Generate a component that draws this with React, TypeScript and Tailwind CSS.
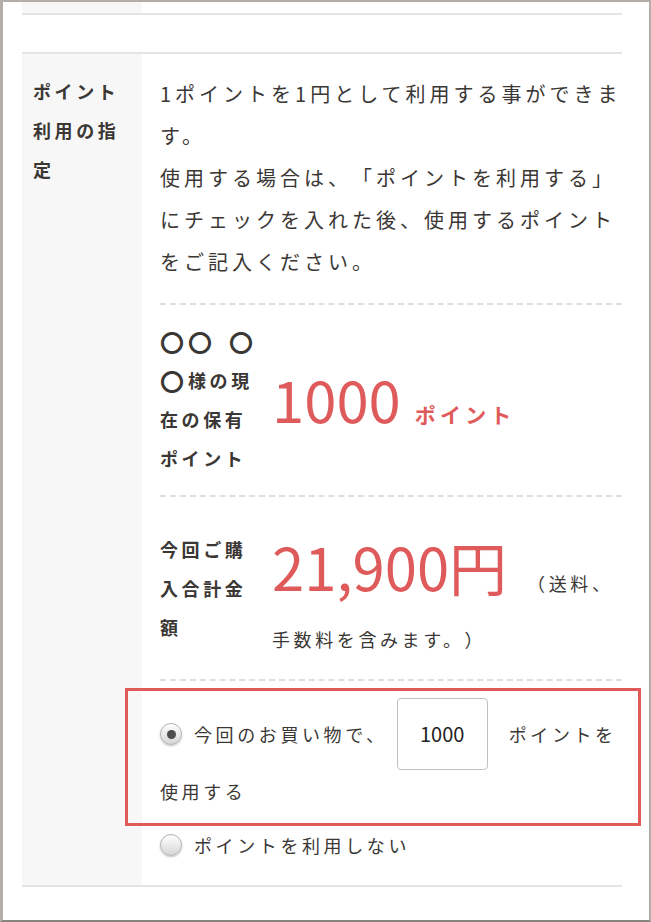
// ポイント利用の指定 (point usage form row)

function Radio({ checked }: { checked?: boolean }) {
  return (
    <span className="w-[22px] h-[22px] shrink-0 rounded-full border border-[#b4b4b4] bg-gradient-to-b from-white to-[#d6d6d6] shadow-[0_1px_2px_rgba(0,0,0,0.25)] flex items-center justify-center">
      {checked && <span className="w-[9px] h-[9px] rounded-full bg-[#4d4d4d]" />}
    </span>
  );
}

// big masked-name circle
function Maru() {
  return <span className="inline-block text-[24px] leading-none tracking-normal align-[-3px] mr-[4px]">〇</span>;
}

const introLines = [
  "1ポイントを1円として利用する事ができま",
  "す。",
  "使用する場合は、「ポイントを利用する」",
  "にチェックを入れた後、使用するポイント",
  "をご記入ください。",
];

export default function App() {
  return (
    <div className="relative w-[651px] h-[922px] bg-white border-l-[3px] border-t-2 border-r-2 border-[#b4aea8] border-b-2 border-b-[#8a847e] text-[#3b3735] font-['Noto_Sans_CJK_JP','Noto_Sans',sans-serif] [text-spacing-trim:space-all] overflow-hidden">
      <div className="ml-[19px] mr-[27px]">
        {/* end of previous row */}
        <div className="flex h-[13px] border-b-2 border-[#e4e4e4]">
          <div className="w-[120px] bg-[#f7f7f7]" />
        </div>

        {/* point row */}
        <div className="mt-[37px] flex border-t-2 border-b-2 border-[#e4e4e4]">
          <div className="w-[120px] shrink-0 bg-[#f7f7f7] pt-[18px] pl-[11px] text-[18px] leading-[39px] font-bold tracking-[0.2em] whitespace-nowrap">
            ポイント
            <br />
            利用の指
            <br />
            定
          </div>

          <div className="flex-1 pl-[18px]">
            {/* description */}
            <div className="pt-[19px] pb-[20px] border-b-2 border-dashed border-[#dedede] text-[20px] leading-[42px] tracking-[0.2em] whitespace-nowrap">
              {introLines.map((line) => (
                <div key={line}>{line}</div>
              ))}
            </div>

            {/* current points */}
            <div className="flex items-center py-[17px] border-b-2 border-dashed border-[#dedede]">
              <div className="w-[112px] shrink-0 text-[18px] leading-[39px] font-bold tracking-[0.2em] whitespace-nowrap">
                <div>
                  <Maru />
                  <Maru />
                  <span className="inline-block w-[13px]" />
                  <Maru />
                </div>
                <div>
                  <Maru />
                  様の現
                </div>
                <div>在の保有</div>
                <div>ポイント</div>
              </div>
              <div className="flex items-baseline text-[#df5a5a]">
                <span className="text-[58px] leading-none">1000</span>
                <span className="ml-[14px] text-[21px] font-bold tracking-[0.2em]">ポイント</span>
              </div>
            </div>

            {/* total */}
            <div className="flex items-center pt-[20px] pb-[19px] border-b-2 border-dashed border-[#dedede]">
              <div className="w-[112px] shrink-0 text-[18px] leading-[39px] font-bold tracking-[0.2em] whitespace-nowrap">
                今回ご購
                <br />
                入合計金
                <br />
                額
              </div>
              <div className="whitespace-nowrap">
                <div className="flex items-baseline">
                  <span className="text-[58px] leading-[98px] text-[#df5a5a]">21,900円</span>
                  <span className="ml-[20px] text-[18px] tracking-[0.2em]">（送料、</span>
                </div>
                <div className="mt-[3px] text-[18px] leading-[42px] tracking-[0.2em]">手数料を含みます。）</div>
              </div>
            </div>

            {/* radios */}
            <div className="pt-[17px] pb-[19px] text-[18px] tracking-[0.2em] whitespace-nowrap">
              <div className="flex items-center h-[72px]">
                <Radio checked />
                <span className="ml-[12px]">今回のお買い物で、</span>
                <div className="ml-[9px] w-[91px] h-[72px] shrink-0 rounded-[4px] border border-[#c4c0bd] flex items-center justify-center text-[20px] tracking-normal text-[#222]">
                  1000
                </div>
                <span className="ml-[21px]">ポイントを</span>
              </div>
              <div className="leading-[42px]">使用する</div>
              <div className="mt-[12px] flex items-center h-[42px]">
                <Radio />
                <span className="ml-[12px]">ポイントを利用しない</span>
              </div>
            </div>
          </div>
        </div>
      </div>

      {/* highlight box */}
      <div className="absolute left-[122px] top-[686px] w-[516px] h-[138px] border-[3px] border-[#e05a5a] pointer-events-none" />
    </div>
  );
}
